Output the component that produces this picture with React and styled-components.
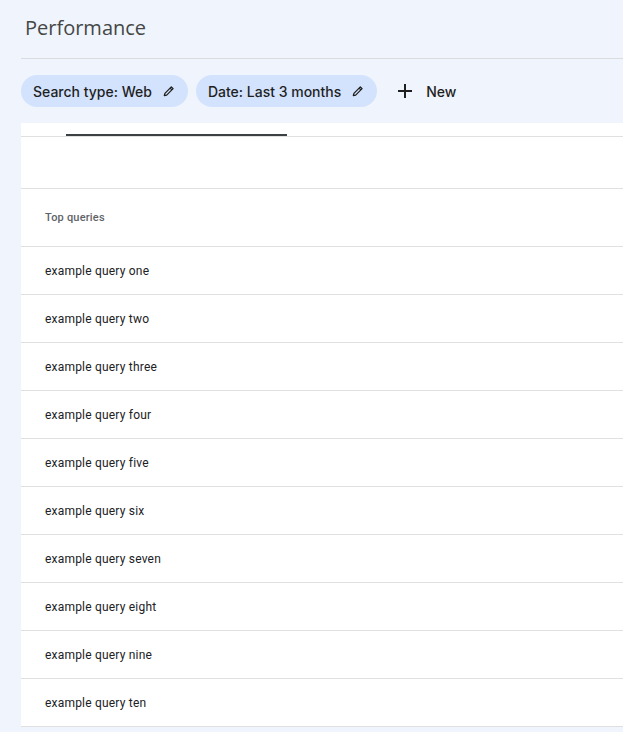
import React from 'react';
import styled, { createGlobalStyle } from 'styled-components';

const Global = createGlobalStyle`
  html, body { margin: 0; padding: 0; background: #f0f4fc; }
  body { font-family: Roboto, "Liberation Sans", Arial, sans-serif; }
`;

const Page = styled.div`
  width: 623px;
  height: 732px;
  overflow: hidden;
  background: #f0f4fc;
  padding-left: 21px;
  box-sizing: border-box;
`;

const Header = styled.div`
  height: 59px;
  border-bottom: 1px solid #dadce0;
  display: flex;
  align-items: center;
  padding-left: 4px;
  padding-bottom: 4px;
  box-sizing: border-box;
`;

const Title = styled.h1`
  margin: 0;
  font-family: "Open Sans", "Noto Sans", sans-serif;
  font-weight: 400;
  font-size: 20px;
  color: #444746;
`;

const Filters = styled.div`
  height: 64px;
  display: flex;
  align-items: center;
  gap: 8px;
`;

const Chip = styled.div`
  height: 32px;
  border-radius: 16px;
  background: #d3e3fd;
  display: flex;
  align-items: center;
  gap: 10px;
  padding: 0 12px;
  font-family: Inter, Roboto, sans-serif;
  font-size: 14px;
  font-weight: 500;
  color: #1f1f1f;
`;

const NewButton = styled.div`
  display: flex;
  align-items: center;
  gap: 13px;
  margin-left: 12px;
  font-family: Inter, Roboto, sans-serif;
  font-size: 14px;
  font-weight: 500;
  color: #1f1f1f;
`;

const Card = styled.div`
  background: #fff;
`;

const TabBar = styled.div`
  height: 13px;
  border-bottom: 1px solid #e0e0e0;
  padding-left: 45px;
  display: flex;
  align-items: flex-end;
`;

const TabIndicator = styled.div`
  width: 221px;
  height: 2px;
  background: #3c4043;
`;

const Spacer = styled.div`
  height: 51px;
  border-bottom: 1px solid #e0e0e0;
`;

const TableHead = styled.div`
  height: 57px;
  border-bottom: 1px solid #e0e0e0;
  display: flex;
  align-items: center;
  padding-left: 24px;
  font-size: 11px;
  font-weight: 500;
  letter-spacing: 0.2px;
  color: #5f6368;
`;

const Row = styled.div`
  height: 47px;
  border-bottom: 1px solid #e0e0e0;
  display: flex;
  align-items: center;
  padding-left: 24px;
  font-size: 12px;
  letter-spacing: 0.2px;
  color: #202124;
`;

const Pencil = () => (
  <svg width="14" height="14" viewBox="0 0 24 24" fill="none" stroke="#1f1f1f" strokeWidth="2.2" strokeLinejoin="round">
    <path d="M4 20l1-4L16 5l3 3L8 19z" />
    <path d="M14 7l3 3" />
  </svg>
);

const Plus = () => (
  <svg width="16" height="16" viewBox="0 0 16 16" stroke="#1f1f1f" strokeWidth="2">
    <path d="M8 1v14M1 8h14" />
  </svg>
);

// placeholder query text
const queries = [
  'example query one',
  'example query two',
  'example query three',
  'example query four',
  'example query five',
  'example query six',
  'example query seven',
  'example query eight',
  'example query nine',
  'example query ten',
];

export default function App() {
  return (
    <Page>
      <Global />
      <Header>
        <Title>Performance</Title>
      </Header>
      <Filters>
        <Chip>Search type: Web <Pencil /></Chip>
        <Chip>Date: Last 3 months <Pencil /></Chip>
        <NewButton><Plus /> New</NewButton>
      </Filters>
      <Card>
        <TabBar><TabIndicator /></TabBar>
        <Spacer />
        <TableHead>Top queries</TableHead>
        {queries.map(q => <Row key={q}>{q}</Row>)}
      </Card>
    </Page>
  );
}
